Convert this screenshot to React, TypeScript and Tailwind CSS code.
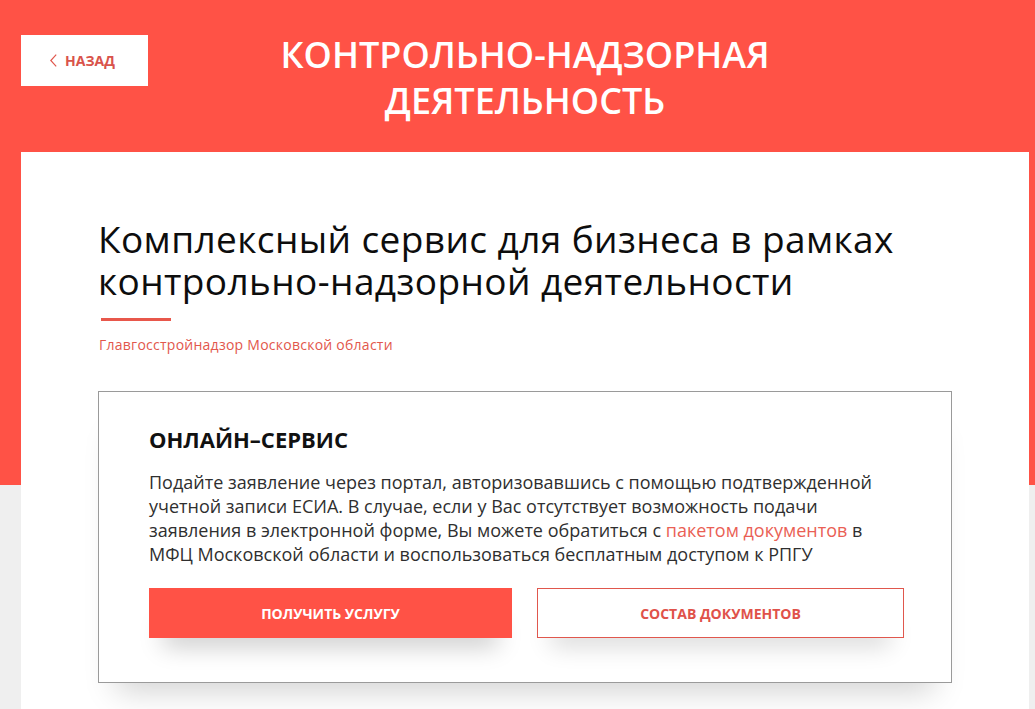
export default function App() {
  return (
    <div className="h-[709px] overflow-hidden bg-[linear-gradient(to_bottom,#ff5246_485px,#efefef_485px)] font-['Open_Sans',sans-serif]">
      <div className="ml-[21px] w-[1008px]">
        {/* header */}
        <div className="flex items-start pt-[32px]">
          <button className="mt-[3px] flex h-[51px] w-[127px] items-center justify-center gap-[8px] pr-[4px] bg-white">
            <svg width="7" height="13" viewBox="0 0 7 13" fill="none">
              <polyline points="6.2,0.7 0.8,6.5 6.2,12.3" stroke="#e0574d" strokeWidth="1.2" />
            </svg>
            <span className="text-[14px] font-bold leading-none text-[#d9534b]">НАЗАД</span>
          </button>
          <h1 className="flex-1 pr-[127px] text-center text-[36px] font-semibold leading-[46px] text-white">
            КОНТРОЛЬНО-НАДЗОРНАЯ
            <br />
            ДЕЯТЕЛЬНОСТЬ
          </h1>
        </div>

        {/* card */}
        <div className="mt-[28px] bg-white px-[77px] pt-[66px] pb-[80px]">
          <h2 className="text-[37px] tracking-[0.4px] leading-[42px] text-[#0d0d0d]">
            Комплексный сервис для бизнеса в рамках
            <br />
            контрольно-надзорной деятельности
          </h2>
          <div className="mt-[16px] h-[3px] w-[70px] ml-[3px] bg-[#e8574b]" />
          <p className="mt-[14px] ml-[1px] text-[14px] tracking-[0.25px] leading-[20px] text-[#e2574c]">
            Главгосстройнадзор Московской области
          </p>

          <div className="mt-[36px] w-[854px] border border-[#9a9a9a] bg-white pt-[32px] pr-[46px] pb-[44px] pl-[50px] shadow-[0_26px_30px_-18px_rgba(0,0,0,0.18)]">
            <h3 className="text-[22px] font-bold leading-[30px] text-[#111]">ОНЛАЙН–СЕРВИС</h3>
            <p className="mt-[16px] text-[18px] leading-[24px] text-[#2f2f2f]">
              Подайте заявление через портал, авторизовавшись с помощью подтвержденной
              учетной записи ЕСИА. В случае, если у Вас отсутствует возможность подачи
              заявления в электронной форме, Вы можете обратиться с{" "}
              <a className="text-[#ea5f55]">пакетом документов</a> в МФЦ Московской
              области и воспользоваться бесплатным доступом к РПГУ
            </p>
            <div className="mt-[22px] flex gap-[25px]">
              <button className="h-[50px] w-[363px] bg-[#ff5246] text-[14px] font-bold text-white shadow-[0_22px_24px_-14px_rgba(0,0,0,0.22)]">
                ПОЛУЧИТЬ УСЛУГУ
              </button>
              <button className="h-[50px] w-[367px] border border-[#e0574d] bg-white text-[14px] font-bold text-[#e0524a] shadow-[0_22px_24px_-14px_rgba(0,0,0,0.16)]">
                СОСТАВ ДОКУМЕНТОВ
              </button>
            </div>
          </div>
        </div>
      </div>
    </div>
  );
}
